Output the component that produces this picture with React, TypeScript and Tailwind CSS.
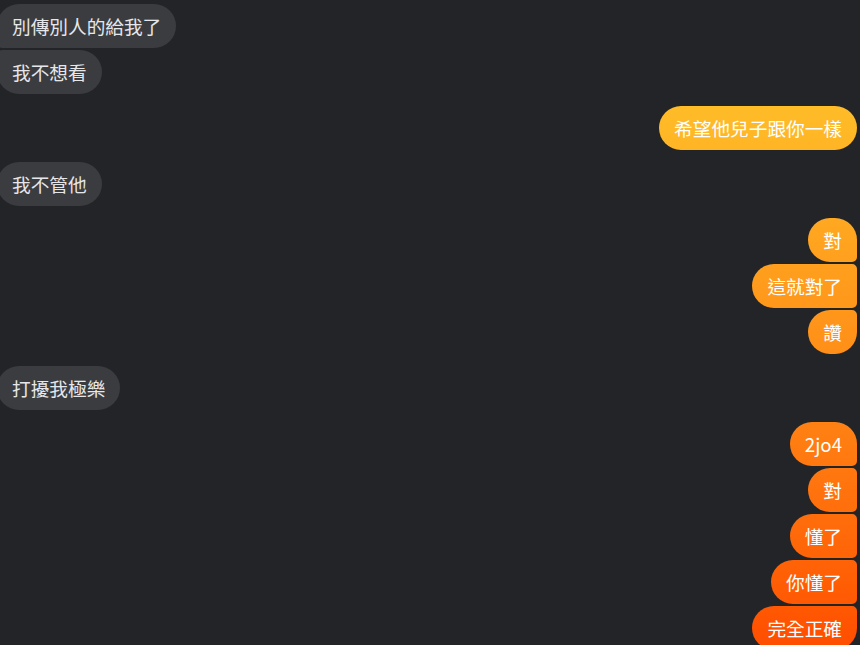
import React from "react";

type Msg = { text: string; me: boolean };
const groups: Msg[][] = [
  [
    { text: "別傳別人的給我了", me: false },
    { text: "我不想看", me: false },
  ],
  [{ text: "希望他兒子跟你一樣", me: true }],
  [{ text: "我不管他", me: false }],
  [
    { text: "對", me: true },
    { text: "這就對了", me: true },
    { text: "讚", me: true },
  ],
  [{ text: "打擾我極樂", me: false }],
  [
    { text: "2jo4", me: true },
    { text: "對", me: true },
    { text: "懂了", me: true },
    { text: "你懂了", me: true },
    { text: "完全正確", me: true },
  ],
];

function radius(me: boolean, i: number, n: number): string {
  if (n === 1) return "rounded-[22px]";
  const first = i === 0;
  const last = i === n - 1;
  if (me) {
    if (first) return "rounded-tl-[22px] rounded-bl-[22px] rounded-tr-[22px] rounded-br-[5px]";
    if (last) return "rounded-tl-[22px] rounded-bl-[22px] rounded-tr-[5px] rounded-br-[22px]";
    return "rounded-tl-[22px] rounded-bl-[22px] rounded-tr-[5px] rounded-br-[5px]";
  }
  if (first) return "rounded-tr-[22px] rounded-br-[22px] rounded-tl-[22px] rounded-bl-[5px]";
  if (last) return "rounded-tr-[22px] rounded-br-[22px] rounded-tl-[5px] rounded-bl-[22px]";
  return "rounded-tr-[22px] rounded-br-[22px] rounded-tl-[5px] rounded-bl-[5px]";
}

export default function App() {
  return (
    <div
      className="min-h-screen bg-[#232427] pt-[4px] overflow-hidden"
      style={{ fontFamily: '"Noto Sans CJK TC", "Noto Sans", sans-serif' }}
    >
      <div className="flex flex-col gap-[12px]">
        {groups.map((g, gi) => (
          <div key={gi} className={`flex flex-col gap-[2px] ${g[0].me ? "items-end mr-[3px]" : "items-start -ml-[3px]"}`}>
            {g.map((m, i) => (
              <div
                key={i}
                className={`h-[44px] px-[15px] flex items-center text-[18.67px] leading-none whitespace-nowrap ${radius(m.me, i, g.length)} ${
                  m.me
                    ? "text-white bg-fixed bg-linear-to-b from-[#ffcf2e] to-[#ff4e00]"
                    : "text-[#e6e7ea] bg-[#3b3c3f]"
                }`}
              >
                {m.text}
              </div>
            ))}
          </div>
        ))}
      </div>
    </div>
  );
}
